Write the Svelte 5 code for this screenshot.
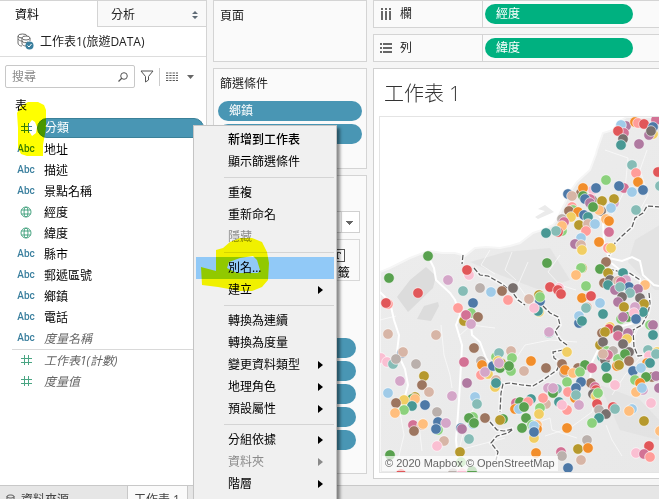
<script>
    const fields = [
        { name: '分類', type: 'number', selected: true },
        { name: '地址', type: 'text' },
        { name: '描述', type: 'text' },
        { name: '景點名稱', type: 'text' },
        { name: '經度', type: 'geo' },
        { name: '緯度', type: 'geo' },
        { name: '縣市', type: 'text' },
        { name: '郵遞區號', type: 'text' },
        { name: '鄉鎮', type: 'text' },
        { name: '電話', type: 'text' },
        { name: '度量名稱', type: 'text', generated: true }
    ];
    const measures = [
        { name: '工作表1(計數)', type: 'measure', generated: true },
        { name: '度量值', type: 'measure', generated: true }
    ];
    const menuGroups = [
        [{ label: '新增到工作表', strong: true }, { label: '顯示篩選條件' }],
        [{ label: '重複' }, { label: '重新命名' }, { label: '隱藏', disabled: true }],
        [{ label: '別名...', active: true }, { label: '建立', sub: true }],
        [
            { label: '轉換為連續' },
            { label: '轉換為度量' },
            { label: '變更資料類型', sub: true },
            { label: '地理角色', sub: true },
            { label: '預設屬性', sub: true }
        ],
        [
            { label: '分組依據', sub: true },
            { label: '資料夾', sub: true, disabled: true },
            { label: '階層', sub: true }
        ]
    ];
    // pills on the marks card, their captions stay behind the menu
    const markPills = [1, 2, 3, 4, 5];

    // one letter per category colour
    const palette = {
        b: '#4e79a7', c: '#a0cbe8', o: '#f28e2b', h: '#ffbe7d', g: '#59a14f',
        l: '#8cd17d', v: '#b6992d', y: '#f1ce63', t: '#499894', a: '#86bcb6',
        r: '#e15759', s: '#ff9d9a', d: '#79706e', e: '#bab0ac', m: '#d37295',
        k: '#fabfd2', p: '#b07aa1', q: '#d4a6c8', n: '#9d7660', w: '#d7b5a6'
    };

    // colour, x, y
    const points = `
        g 428 256,g 389 278,k 469 275,r 467 270,q 448 280,a 463 291,e 480 288,c 491 292,n 502 291,d 513 288
        r 418 293,s 388 304,r 386 303,s 508 300,b 473 303,s 458 308,l 471 313,v 464 321,m 466 315,n 478 317
        q 471 324,w 388 334,w 436 335,n 474 348,l 496 357,a 499 353,w 511 351,l 512 358,b 402 353,w 403 352
        k 381 358,k 387 362,a 393 364,e 396 359,e 416 364,m 464 362,e 481 361,o 482 365,s 481 375,y 488 374
        q 485 372,b 493 366,g 500 368,v 501 363,y 498 361,q 499 363,l 511 371,g 509 366,v 424 376,q 400 381
        n 422 385,p 467 383,w 496 380,y 495 387,t 496 383,w 429 392,c 388 393,q 452 396,c 475 397,a 477 404
        v 415 397,g 412 399,h 415 399,y 404 400,n 396 403,t 412 406,l 404 410,h 395 413,b 425 405,e 437 412
        m 413 425,w 422 425,h 423 424,n 414 431,b 438 422,q 446 423,l 438 430,b 436 429,c 473 424,l 473 417
        g 469 418,g 474 423,n 485 418,b 461 428,p 462 429,a 469 439,g 503 419,v 500 420,w 444 441,k 437 446
        v 460 452,g 390 455,l 461 462,r 401 474,e 453 473,k 462 473,g 472 471
        p 626 126,c 621 125,m 624 133,r 618 131,d 623 139,t 621 145,p 639 144,o 635 122,s 638 123,r 644 124
        m 656 120,y 653 134,p 649 135,b 653 127,d 651 131,a 632 165,s 636 173,r 658 172,o 638 182,l 606 180
        m 624 188,b 619 186,c 632 192,b 643 190,a 660 186,k 593 190,b 596 188,n 581 193,o 583 188,b 568 194
        w 572 196,g 583 196,d 592 200,m 590 199,b 585 199,p 590 203,v 602 201,q 614 203,v 614 199,c 611 208
        a 636 210,d 601 211,h 599 210,g 593 207,s 572 207,l 573 210,n 569 211,o 578 212,y 571 217,e 562 219
        m 564 222,l 562 231,h 562 226,r 558 232,a 556 231,t 546 233,b 584 215,t 588 217,v 579 225,w 588 224
        c 595 224,s 586 231,h 606 219,o 609 221,m 609 232,c 581 238,p 575 244,w 581 245,y 582 250,o 599 242
        s 608 248,y 611 248,n 606 262,g 547 263,v 582 268,l 581 268,g 600 269,v 608 273,h 576 275,t 623 273
        q 626 280,n 604 283,d 610 280,w 618 281,t 608 285,h 645 285,l 586 286,k 559 288,r 550 287,r 558 290
        r 561 294,w 529 299,v 539 295,b 540 301,l 540 297,y 539 312,t 538 311,k 534 308,o 582 298,r 591 296
        c 600 303,t 603 314,w 587 307,a 586 308,b 579 323,c 579 316,t 582 321,m 621 282,b 629 287,p 615 290
        a 620 287,p 638 289,a 630 293,d 622 297,p 618 302,d 640 298,v 644 304,v 624 307,t 643 312,q 635 307
        l 621 319,g 628 317,p 623 317,k 634 313,b 636 319,l 650 325,p 653 325,t 653 335,y 610 327,r 609 329
        n 602 333,v 605 332,d 618 330,m 618 336,p 628 333,y 627 339,d 623 344,v 600 345,d 603 342,a 549 333
        q 549 332,y 567 352,o 531 361,n 546 368,w 524 371,n 562 364,e 564 373,o 565 370,n 578 368,h 573 373
        g 585 365,l 580 372,m 592 368,g 607 378,n 591 383,k 615 385,a 602 357,l 607 351,d 605 360,e 613 351
        m 608 355,w 603 354,l 618 359,d 629 352,g 625 354,n 629 361,o 617 366,v 619 365,t 606 367,a 648 350
        k 649 356,y 657 352,a 656 354,o 647 363,t 650 363,b 633 371,c 641 368,n 652 377,p 656 376,g 646 377
        l 635 380,o 640 383,q 643 390,h 636 392,c 642 388,p 659 388,k 651 403,c 632 409,h 629 411,v 644 421
        h 660 431,r 649 446,k 636 453,m 644 454,s 650 457,l 567 382,q 548 388,a 557 389,g 553 393,q 553 388
        b 581 382,s 568 392,b 576 388,o 575 398,a 576 395,m 595 387,r 596 390,d 593 394,y 596 396,l 598 393
        q 579 405,r 597 404,e 599 410,d 606 414,t 599 418,l 592 423,r 613 407,a 615 409,s 567 410,t 559 402
        k 562 405,w 546 404,s 543 398,l 540 408,y 539 414,t 531 399,m 516 403,g 520 402,s 528 402,o 515 409
        c 519 409,g 524 407,g 526 418,l 532 425,g 522 428,h 537 425,o 537 429,c 534 426,y 534 438,b 534 432
        o 567 428,e 587 440,v 578 449,o 588 448,w 581 460,b 568 468,m 561 452,e 562 456,o 536 453`
        .split(/[,\n]/)
        .map((row) => row.trim())
        .filter(Boolean)
        .map((row) => {
            const [color, x, y] = row.split(' ');
            return { fill: palette[color], x: Number(x), y: Number(y) };
        });

    const borders = [
        'M463 255L462 264M474 268L480 275L488 276L495 280L502 284L513 293L518 300L525 305M543 306L550 313L558 317L560 325L555 331L560 340L567 345M563 350L553 352L554 358L560 362L557 370L543 380L533 386L522 385L510 383L503 384L501 393L500 412M490 422L497 430L504 431L513 429L508 433L497 436L491 443L498 452L496 460',
        'M660 207L647 206L643 213L635 218L632 227L622 236L615 243L609 256M609 269L617 271L628 272L640 280M649 293L650 303L648 313L642 325L633 330L634 347L638 356L646 355'
    ];
</script>

{#snippet fieldIcon(type)}
    {#if type === 'text'}
        <span class="abc">Abc</span>
    {:else if type === 'geo'}
        <svg class="geo" width="12" height="12" viewBox="0 0 12 12">
            <circle cx="6" cy="6" r="5" />
            <ellipse cx="6" cy="6" rx="2" ry="5" />
            <path d="M1.5 4H10.5M1.5 8H10.5" />
        </svg>
    {:else}
        <svg class={type} width="12" height="12" viewBox="0 0 12 12">
            <path d="M4.5 1V11M8.5 1V11M1 4.5H12M1 8.5H12" />
        </svg>
    {/if}
{/snippet}

{#snippet fieldRow(field)}
    <li class="field">
        <span class="field-icon">{@render fieldIcon(field.type)}</span>
        <button class="field-name" class:selected={field.selected} class:generated={field.generated}>{field.name}</button>
    </li>
{/snippet}

<div class="app">
    <div class="workspace">
        <aside class="data-pane">
            <div class="pane-tabs">
                <button class="pane-tab current">資料</button>
                <button class="pane-tab">
                    分析
                    <svg width="6" height="8" viewBox="0 0 6 8"><path d="M3 0L6 3H0ZM3 8L0 5H6Z" fill="#5f6b76" /></svg>
                </button>
            </div>
            <button class="source">
                <svg width="17" height="17" viewBox="0 0 17 17">
                    <g fill="none" stroke="#6b6b6b">
                        <path d="M1 3V10C1 12 3 13 5 13" />
                        <ellipse cx="5.500" cy="3" rx="4.500" ry="2" />
                        <path d="M1 6C2 7 3 8 5 8M5 5V11C5 12 7 13 9 13M13 5V8" />
                        <ellipse cx="9" cy="5" rx="4" ry="2" fill="#fff" />
                        <path d="M5 8C6 10 9 10 11 9" />
                    </g>
                    <circle cx="12.500" cy="12.500" r="4" fill="#3a7f9e" />
                    <path d="M10.500 12.500L12 14L14.500 11" fill="none" stroke="#fff" />
                </svg>
                工作表1(旅遊DATA)
            </button>
            <div class="tools">
                <label class="search">
                    <input type="text" placeholder="搜尋" aria-label="搜尋" />
                    <svg width="10" height="10" viewBox="0 0 10 10">
                        <circle cx="6" cy="4" r="3.300" fill="none" stroke="#555" />
                        <path d="M4 6L0.500 9.500" stroke="#555" stroke-width="1.300" />
                    </svg>
                </label>
                <button class="tool" aria-label="篩選">
                    <svg width="14" height="13" viewBox="0 0 14 13">
                        <path d="M1 1H13L8.500 6.500V10L5.500 12V6.500Z" fill="none" stroke="#555" stroke-linejoin="round" />
                    </svg>
                </button>
                <button class="tool view" aria-label="檢視">
                    <svg width="12" height="10" viewBox="0 0 12 10">
                        <path d="M0 1H12M0 3.500H12M0 6H12M0 8.500H12" stroke="#555" stroke-dasharray="2.300 1" />
                    </svg>
                    <svg width="7" height="4" viewBox="0 0 7 4"><path d="M0 0H7L3.500 4Z" fill="#666" /></svg>
                </button>
            </div>
            <h2>表</h2>
            <ul class="fields">
                {#each fields as field}
                    {@render fieldRow(field)}
                {/each}
            </ul>
            <ul class="fields measures">
                {#each measures as field}
                    {@render fieldRow(field)}
                {/each}
            </ul>
        </aside>

        <div class="cards">
            <section class="card pages"><h3>頁面</h3></section>
            <section class="card filters">
                <h3>篩選條件</h3>
                <button class="pill">鄉鎮</button>
                <button class="pill" aria-label="縣市"></button>
            </section>
            <section class="card marks" aria-label="標記">
                <select aria-label="標記類型"></select>
                <div class="mark-buttons">
                    <button aria-label="色彩"></button>
                    <button aria-label="大小"></button>
                    <button>
                        <svg width="15" height="13" viewBox="0 0 15 13">
                            <rect x="0.500" y="0.500" width="14" height="12" fill="#fff" stroke="#555" />
                            <path d="M4.500 5V3.500H10.500V5M7.500 3.500V9.500M6 9.500H9" fill="none" stroke="#444" />
                        </svg>
                        標籤
                    </button>
                    <button aria-label="詳細資料"></button>
                    <button aria-label="工具提示"></button>
                </div>
                <div class="mark-pills">
                    {#each markPills as n}
                        <button class="pill" aria-label="標記 {n}"></button>
                    {/each}
                </div>
            </section>
        </div>

        <main class="sheet">
            <div class="shelf">
                <span class="shelf-name">
                    <svg width="12" height="12" viewBox="0 0 12 12">
                        <path d="M2 0V2M6 0V2M10 0V2M2 3V12M6 3V12M10 3V12" stroke="#666" stroke-width="2" />
                    </svg>
                    欄
                </span>
                <div class="shelf-drop"><button class="pill green">經度</button></div>
            </div>
            <div class="shelf">
                <span class="shelf-name">
                    <svg width="12" height="12" viewBox="0 0 12 12">
                        <path d="M0 2H2M0 6H2M0 10H2M3 2H12M3 6H12M3 10H12" stroke="#666" stroke-width="2" />
                    </svg>
                    列
                </span>
                <div class="shelf-drop"><button class="pill green">緯度</button></div>
            </div>
            <section class="viz">
                <h1>工作表 1</h1>
                <div class="map">
                    <svg class="canvas" viewBox="380 117 279 355" preserveAspectRatio="xMinYMin slice">
                        <defs>
                            <linearGradient id="land" x1="0" y1="0" x2="1" y2="1">
                                <stop offset="0" stop-color="#ededed" />
                                <stop offset="0.6" stop-color="#e6e6e6" />
                                <stop offset="1" stop-color="#e2e2e2" />
                            </linearGradient>
                        </defs>
                        <path d="M380 272L390 268L400 263L410 258L423 253L430 251L442 253L455 253L465 256L475 248L486 247L500 248L510 246L520 243L533 233L545 229L553 225L557 220L560 213L565 203L570 192L577 182L590 170L596 154L597 150L603 133L613 130L620 121L627 117H1200V900H380Z" fill="url(#land)" stroke="#f6f6f6" stroke-width="2" />
                        <path d="M535 217L545 211L538 209L545 205L554 212L538 219Z" fill="#ebebeb" />
                        <path d="M397 297L410 280L426 267L436 276L433 288L408 312ZM417 319L424 306L438 302L439 306L431 321Z" fill="#dcdcdc" />
                        <path d="M660 225L635 240L628 262L655 290L660 290ZM470 262L505 252L550 248L570 280L540 290L500 275ZM600 385L640 400L659 420V440L620 430Z" fill="#dfdfdf" opacity="0.7" />
                        <g fill="none" stroke="#fff">
                            <path d="M428 256L434 268L436 280L450 293L455 300L460 315L456 325L462 345L461 365L459 400L456 440L459 471M471 324L472 335L480 342L486 358L495 370" stroke-width="2" />
                            <path d="M380 292L390 302L394 320L399 335L397 352L405 369L408 385L404 400L398 412M590 203L603 221L604 242L610 262L620 270L640 279L641 290M609 258L622 261L632 257L640 261L643 275L654 285L659 286M641 290L634 323L600 332L599 348L592 362L590 380L596 395" stroke-width="2" />
                            <path d="M596 395L592 412L570 428L545 436M441 325L444 355L450 375L452 388M400 412L404 435L398 460M419 425L422 451M475 405L464 430L459 450L486 443L505 438M515 360L525 345L550 340L577 342M530 425L550 418L552 430L577 438M606 425L612 440L622 456M640 325L630 345L640 358L625 375L612 395M380 320L396 316M458 337L471 325L495 328M605 150L628 158L625 190L612 215M647 150L640 170L648 195L632 225M528 262L518 285L530 302M560 255L548 272L560 285L576 290M490 250L481 265L495 274M512 252L505 270L516 280" stroke-width="1" opacity="0.6" />
                        </g>
                        {#each borders as d}
                            <path {d} fill="none" stroke="#fff" stroke-width="4" opacity="0.6" />
                            <path {d} fill="none" stroke="#5a5a5a" stroke-width="1.200" stroke-dasharray="5 2" />
                        {/each}
                        {#each points as p}
                            <circle cx={p.x} cy={p.y} r="5.300" fill={p.fill} stroke="#fff" stroke-opacity="0.6" />
                        {/each}
                    </svg>
                    <small class="credit">© 2020 Mapbox © OpenStreetMap</small>
                </div>
            </section>
        </main>
    </div>

    <nav class="sheet-tabs">
        <button class="sheet-tab">
            <svg width="9" height="11" viewBox="0 0 9 11">
                <path d="M1 2.500V9C1 11 8 11 8 9V2.500M1 2.500C1 0.500 8 0.500 8 2.500C8 4.500 1 4.500 1 2.500" fill="none" stroke="#555" />
            </svg>
            資料來源
        </button>
        <button class="sheet-tab current">工作表 1</button>
    </nav>

    <div class="menu" role="menu">
        {#each menuGroups as group}
            <div class="menu-group" role="group">
                {#each group as item}
                    <button role="menuitem" class:strong={item.strong} class:active={item.active} disabled={item.disabled}>
                        {item.label}
                        {#if item.sub}
                            <svg width="5" height="8" viewBox="0 0 5 8"><path d="M0 0L5 4L0 8Z" fill="currentColor" /></svg>
                        {/if}
                    </button>
                {/each}
            </div>
        {/each}
    </div>

    <!-- highlighter strokes -->
    <svg class="marker" width="280" height="300" viewBox="0 0 280 300" fill="#ff0" fill-rule="evenodd">
        <path d="M17 113L21 106L28 102H38L44 105L46 110V128L43 145V156H27L21 154L18 148V128ZM28 125L32 120L35 122L37 127L36 133L32 136L29 131Z" />
        <path d="M216 250L223 248L230 242L240 238H252L262 242L267 252L269 263L268 280L262 287L252 291H240L218 287L202 285L201 267L216 271ZM227 268L229 262L240 258L253 256L257 260L260 270L258 273H237Z" />
    </svg>
</div>

<style>
    :global(body) {
        overflow: hidden;
    }

    /* the sheet tabs run past the bottom of the window */
    .app {
        position: relative;
        display: flex;
        flex-direction: column;
        height: calc(100vh + 14px);
        background: #f5f5f5;
        color: #222;
        font: 12px/20px "Open Sans", "Noto Sans CJK TC", sans-serif;
    }

    h1,
    h2,
    h3,
    ul {
        margin: 0;
        padding: 0;
        font-weight: 400;
        list-style: none;
    }

    button,
    input,
    select {
        box-sizing: border-box;
        margin: 0;
        padding: 0;
        border: 0;
        background: none;
        color: inherit;
        font: inherit;
        text-align: left;
    }

    svg {
        flex: none;
        display: block;
    }

    .workspace {
        flex: 1;
        display: grid;
        grid-template-columns: 207px 154px minmax(0, 1fr);
        column-gap: 6px;
        min-height: 0;
    }

    /* Data pane */
    .data-pane {
        min-width: 0;
        border-right: 1px solid #d4d4d4;
        background: #fff;
    }

    .pane-tabs {
        display: flex;
        height: 27px;
    }

    .pane-tab {
        flex: 1;
        display: flex;
        align-items: center;
        justify-content: space-between;
        padding: 2px 8px 0 13px;
        border: 1px solid #d4d4d4;
        border-right: 0;
        background: #f9f9f9;
    }

    .pane-tab.current {
        flex: 0 0 97px;
        padding-left: 15px;
        border-width: 1px 0 0;
        background: #fff;
        color: #000;
    }

    .source {
        display: flex;
        align-items: center;
        gap: 6px;
        width: 100%;
        height: 30px;
        padding-left: 17px;
        border-bottom: 1px solid #ddd;
    }

    .tools {
        display: flex;
        align-items: center;
        gap: 5px;
        padding: 8px 12px 0 5px;
    }

    .search {
        flex: 1;
        display: flex;
        align-items: center;
        min-width: 0;
        height: 21px;
        padding: 0 6px;
        border: 1px solid #c8c8c8;
        border-radius: 2px;
    }

    .search input {
        flex: 1;
        width: 0;
        min-width: 0;
        outline: 0;
    }

    .search input::placeholder {
        color: #8a8a8a;
    }

    .tool.view {
        display: flex;
        align-items: center;
        gap: 9px;
        height: 18px;
        padding-left: 6px;
        border-left: 1px solid #ccc;
    }

    h2 {
        padding: 6px 0 0 15px;
        color: #000;
        font-size: 12px;
        line-height: 24px;
    }

    .field {
        display: flex;
        align-items: flex-start;
        height: 21px;
        padding-right: 2px;
    }

    .field-icon {
        display: flex;
        align-items: center;
        justify-content: center;
        width: 20px;
        height: 20px;
        margin: 0 1px 0 16px;
        fill: none;
        stroke: #4aa583;
    }

    .field-icon .number {
        stroke: #3a7f9e;
    }

    .abc {
        color: #3a7f9e;
        font: 500 10px/22px Roboto, sans-serif;
        stroke: none;
    }

    .field-name {
        flex: 1;
        height: 20px;
        padding: 1px 0 0 7px;
        color: #000;
    }

    .field-name.selected {
        padding-top: 0;
        border: 1px solid #3b8199;
        border-radius: 10px;
        background: #4996b4;
        color: #fff;
        line-height: 18px;
    }

    .field-name.generated {
        color: #666;
        font-style: italic;
    }

    .measures {
        margin-left: 12px;
        border-top: 1px solid #d9d9d9;
    }

    .measures .field-icon {
        margin-left: 4px;
    }

    /* Shelf cards */
    .cards {
        display: flex;
        flex-direction: column;
        gap: 6px;
        padding-bottom: 11px;
    }

    .card {
        box-sizing: border-box;
        display: flex;
        flex-direction: column;
        gap: 3px;
        padding: 0 4px;
        border: 1px solid #d4d4d4;
        background: #fafafa;
    }

    .card h3 {
        padding-left: 2px;
        font-size: 12px;
        line-height: 29px;
    }

    .pages {
        height: 62px;
    }

    .filters {
        height: 101px;
    }

    .marks {
        flex: 1;
        padding: 35px 6px 0;
    }

    .pill {
        flex: none;
        height: 20px;
        padding-left: 11px;
        border-radius: 10px;
        background: #4996b4;
        color: #fff;
    }

    .pill.green {
        width: 148px;
        background: #00b180;
    }

    select {
        flex: none;
        height: 22px;
        border: 1px solid #d0d0d0;
        appearance: none;
        background:
            linear-gradient(#666, #666) right 6px top 9px / 7px 1px no-repeat,
            linear-gradient(#666, #666) right 7px top 10px / 5px 1px no-repeat,
            linear-gradient(#666, #666) right 8px top 11px / 3px 1px no-repeat,
            linear-gradient(#666, #666) right 9px top 12px / 1px 1px no-repeat,
            linear-gradient(#ddd, #ddd) right 17px top / 1px 100% no-repeat,
            #fff;
    }

    .mark-buttons {
        display: grid;
        grid-template-columns: repeat(3, 1fr);
        gap: 3px;
        margin-top: 3px;
    }

    .mark-buttons button {
        display: flex;
        flex-direction: column;
        align-items: center;
        justify-content: flex-end;
        gap: 4px;
        height: 42px;
        border: 1px solid #d8d8d8;
        color: #000;
        white-space: nowrap;
        line-height: 14px;
    }

    .mark-pills {
        display: flex;
        flex-direction: column;
        gap: 3px;
        margin-top: 9px;
        padding: 0 4px 0 20px;
    }

    /* Sheet */
    .sheet {
        display: flex;
        flex-direction: column;
        gap: 6px;
        padding-bottom: 6px;
    }

    .shelf {
        box-sizing: border-box;
        display: grid;
        grid-template-columns: 108px 1fr;
        height: 28px;
        border: solid #d4d4d4;
        border-width: 1px 0 1px 1px;
        background: #fafafa;
    }

    .shelf-name {
        display: flex;
        align-items: center;
        gap: 8px;
        padding-left: 6px;
    }

    .shelf-drop {
        display: flex;
        align-items: center;
        padding-left: 2px;
        border-left: 1px solid #d4d4d4;
    }

    .viz {
        flex: 1;
        display: flex;
        flex-direction: column;
        min-height: 0;
        padding: 0 0 5px 5px;
        border: solid #d0d0d0;
        border-width: 1px 0 1px 1px;
        background: #fff;
    }

    .viz h1 {
        padding: 2px 0 0 5px;
        color: #333;
        font-size: 20px;
        font-weight: 300;
        line-height: 45px;
    }

    .map {
        position: relative;
        flex: 1;
        min-height: 0;
        border: solid #e4e4e4;
        border-width: 1px 0 1px 1px;
    }

    .canvas {
        width: 100%;
        height: 100%;
    }

    .credit {
        position: absolute;
        bottom: 1px;
        left: 2px;
        padding: 0 3px;
        background: rgba(255, 255, 255, 0.7);
        color: #666;
        font: 11px/15px "Liberation Sans", Arial, sans-serif;
    }

    /* Sheet tabs */
    .sheet-tabs {
        display: flex;
        height: 27px;
        border-top: 1px solid #c8c8c8;
        background: #e6e6e6;
        color: #444;
    }

    .sheet-tab {
        display: flex;
        align-items: center;
        gap: 6px;
        width: 127px;
        padding-left: 6px;
    }

    .sheet-tab.current {
        width: 61px;
        border: solid #c8c8c8;
        border-width: 0 1px;
        background: #fafafa;
    }

    /* Context menu */
    .menu {
        position: absolute;
        top: 125px;
        left: 193px;
        box-sizing: border-box;
        width: 144px;
        padding: 3px 2px;
        border: 1px solid #c4c4c4;
        background: #f0f0f0;
        box-shadow: 3px 3px 3px rgba(0, 0, 0, 0.45);
        color: #000;
    }

    .menu-group::after {
        content: "";
        display: block;
        height: 1px;
        margin: 4px 0 4px 28px;
        background: #d4d4d4;
    }

    .menu button {
        display: flex;
        align-items: center;
        justify-content: space-between;
        width: 100%;
        height: 22px;
        padding: 0 11px 0 32px;
        white-space: nowrap;
    }

    .menu .strong {
        font-weight: 500;
    }

    .menu .active {
        background: #91c9f7;
    }

    .menu button:disabled {
        color: #8a8a8a;
    }

    .marker {
        position: absolute;
        top: 0;
        left: 0;
        mix-blend-mode: multiply;
        pointer-events: none;
    }
</style>
